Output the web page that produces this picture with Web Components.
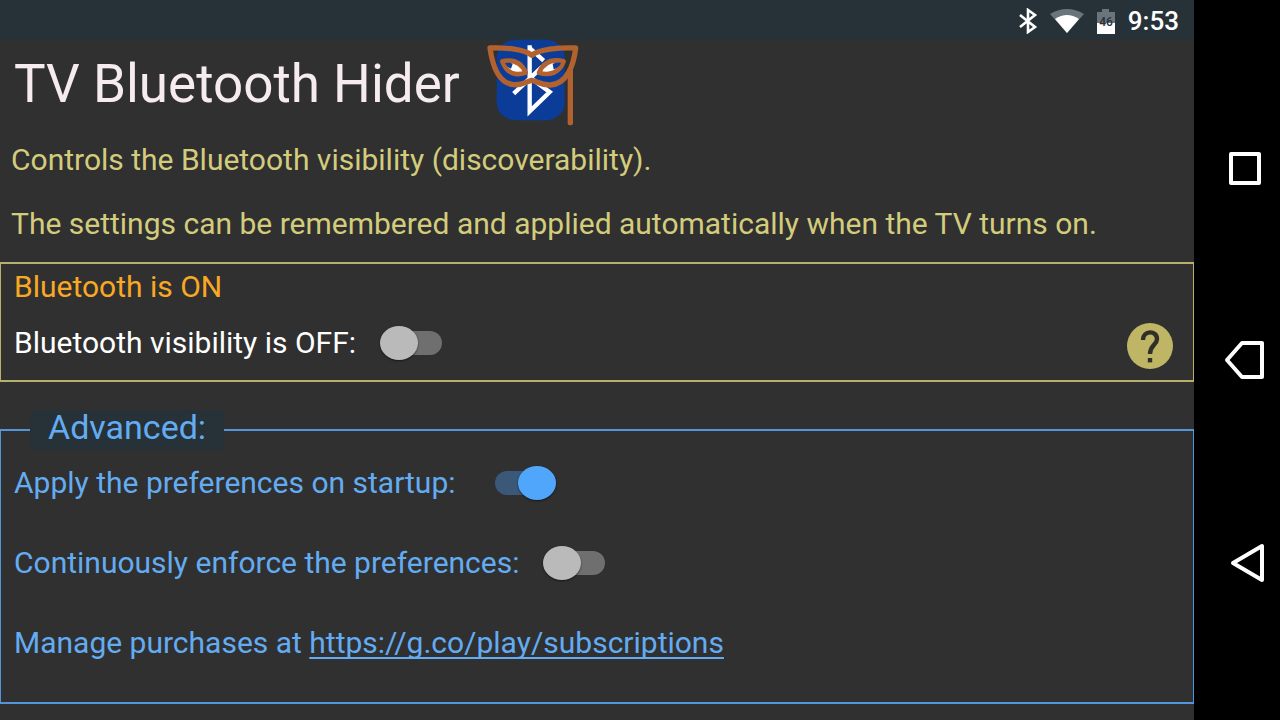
<!DOCTYPE html>
<html lang="en">
<head>
<meta charset="utf-8">
<meta name="viewport" content="width=device-width, initial-scale=1">
<title>TV Bluetooth Hider</title>
<style>
  body { margin: 0; background: #303030; font-family: Roboto, "Liberation Sans", sans-serif; }
</style>
</head>
<body>
<tv-hider-app></tv-hider-app>
<script>
class BaseElement extends HTMLElement {
  constructor() {
    super();
    this.attachShadow({ mode: 'open' }).innerHTML =
      '<style>*{box-sizing:border-box}' + this.constructor.css + '</style>' + this.constructor.html;
  }
}

customElements.define('status-bar', class extends BaseElement {
  static css = `
    :host { display: flex; align-items: center; justify-content: flex-end; gap: 12px; height: 40px;
      padding: 2px 15px 0 0; background: #263238; color: #fff; }
    svg { display: block; }
    time { font-size: 26px; line-height: 32px; font-weight: 500; }
  `;
  static html = `
    <svg width="20" height="26" viewBox="0 0 20 26" fill="none" stroke="#fff" stroke-width="2.6">
      <path d="M2 7L17 19L10 24V2L17 7L2 19"/>
    </svg>
    <svg width="34" height="24" viewBox="0 0 34 24">
      <path fill="#69757b" d="M0 5Q17 -5 34 5L17 24Z"/>
      <path fill="#fff" d="M5 10Q17 2 29 10L17 24Z"/>
    </svg>
    <svg width="20" height="25" viewBox="0 0 20 25">
      <path fill="#69757b" d="M6 0H13V3H19V14H1V3H6Z"/>
      <path fill="#fff" d="M1 14H19V25H1Z"/>
      <text x="10" y="17" text-anchor="middle" font-size="12" font-weight="500" fill="#263238">46</text>
    </svg>
    <time>9:53</time>
  `;
});

customElements.define('app-logo', class extends BaseElement {
  static css = `:host { display: block; } svg { display: block; overflow: visible; }`;
  static html = `
    <svg width="92" height="84" viewBox="24 30 276 252" role="img" aria-label="Masked Bluetooth logo">
      <rect x="53" y="29" width="204" height="242" rx="58" ry="52" fill="#0b3c98"/>
      <path d="M104 191L190 110M152 46V244L212 186L150 140M152 54L194 92" fill="none" stroke="#fff" stroke-width="13"/>
      <g fill="none" stroke="#b2622f" stroke-width="16" stroke-linejoin="round" stroke-linecap="round">
        <path fill="#0b3c98" fill-opacity="0" d="M33 54C80 52 138 58 158 76C180 58 240 52 290 54C284 106 264 162 214 165C184 166 176 154 158 151C142 154 134 166 104 164C58 160 40 104 33 54Z"/>
        <path fill="#fff" stroke-width="14" d="M70 94C100 88 126 94 140 128C112 138 84 132 70 94Z"/>
        <path fill="#fff" stroke-width="14" d="M254 94C220 86 194 96 180 128C210 138 240 130 254 94Z"/>
        <path d="M274 120V278"/>
      </g>
      <g fill="#0b3c98">
        <path d="M78 100C90 97 96 99 101 102L96 116C90 114 82 108 78 100Z"/>
        <path d="M246 99C236 96 226 99 221 102L224 118C234 116 242 108 246 99Z"/>
      </g>
    </svg>
  `;
});

customElements.define('toggle-row', class extends BaseElement {
  static css = `
    :host { display: flex; align-items: center; gap: 24px; height: 40px; }
    :host([wide]) { gap: 38px; }
    label { line-height: 40px; }
    input { appearance: none; display: grid; align-items: center; width: 62px; height: 34px;
      margin: 0; flex: none; cursor: pointer; }
    input::before, input::after { content: ""; grid-area: 1 / 1; }
    input::before { height: 24px; margin-left: 1px; border-radius: 12px; background: #6f6f6f; }
    input::after { width: 38px; height: 34px; border-radius: 50%; background: #bababa;
      box-shadow: 0 1px 2px #0008; }
    input:checked::before { background: #3b5878; }
    input:checked::after { background: #4fa6fb; justify-self: end; }
  `;
  static html = `<label for="s"><slot></slot></label><input id="s" type="checkbox" role="switch">`;
  connectedCallback() {
    this.shadowRoot.querySelector('input').checked = this.hasAttribute('checked');
  }
});

customElements.define('help-button', class extends BaseElement {
  static css = `
    :host { display: block; }
    button { display: block; padding: 0; border: 0; background: none; cursor: pointer; }
    svg { display: block; }
  `;
  static html = `
    <button type="button" aria-label="Help">
      <svg width="46" height="46" viewBox="0 0 46 46">
        <circle cx="23" cy="23" r="23" fill="#beb565"/>
        <path d="M16 17C16 7 30 7 30 16C30 22 23 22 23 31" fill="none" stroke="#303028" stroke-width="4.4"/>
        <path d="M20.800 35H25.200V39.400H20.800Z" fill="#303028"/>
      </svg>
    </button>
  `;
});

customElements.define('bluetooth-panel', class extends BaseElement {
  static css = `
    :host { display: grid; grid-template-columns: 1fr auto; row-gap: 16px; margin-top: 18px;
      padding: 3px 20px 11px 13px; border: 2px solid #b8b06c; border-left-width: 1px;
      border-right-width: 1px; font-size: 30px; color: #fff; }
    p { grid-column: 1 / 3; margin: 0; line-height: 40px; color: #f9a825; }
  `;
  static html = `
    <p>Bluetooth is ON</p>
    <toggle-row>Bluetooth visibility is OFF:</toggle-row>
    <help-button></help-button>
  `;
});

customElements.define('advanced-panel', class extends BaseElement {
  static css = `
    :host { display: block; margin: 28px 0 16px; font-size: 30px; color: #64acf2; }
    fieldset { display: grid; gap: 40px; min-width: 0; margin: 0; padding: 13px 13px 39px;
      border: 2px solid #5295d8; border-left-width: 1px; border-right-width: 1px; }
    legend { margin-left: 16px; padding: 0 18px 6px; background: #263238; font-size: 34px; line-height: 34px; }
    p { margin: 0; line-height: 40px; }
    a { color: inherit; text-underline-offset: 4px; text-decoration-thickness: 2px; text-decoration-skip-ink: none; }
  `;
  static html = `
    <fieldset>
      <legend>Advanced:</legend>
      <toggle-row wide checked>Apply the preferences on startup:</toggle-row>
      <toggle-row>Continuously enforce the preferences:</toggle-row>
      <p>Manage purchases at <a href="https://g.co/play/subscriptions">https://g.co/play/subscriptions</a></p>
    </fieldset>
  `;
});

customElements.define('nav-rail', class extends BaseElement {
  static css = `
    :host { display: grid; grid-template-rows: 16fr 16fr 18fr; place-items: center;
      padding: 72px 0 48px 16px; background: #000; }
    button { display: block; padding: 0; border: 0; background: none; cursor: pointer; }
    svg { display: block; fill: none; stroke: #fff; stroke-width: 4; stroke-linejoin: round; }
  `;
  static html = `
    <button type="button" aria-label="Recent apps"><svg width="44" height="44" viewBox="0 0 44 44"><path d="M8 8H36V37H8Z"/></svg></button>
    <button type="button" aria-label="Home"><svg width="44" height="44" viewBox="0 0 44 44"><path d="M4 22L19 5H39V39H19Z"/></svg></button>
    <button type="button" aria-label="Back"><svg width="44" height="44" viewBox="0 0 44 44"><path d="M10 21L39 4V38Z"/></svg></button>
  `;
});

customElements.define('tv-hider-app', class extends BaseElement {
  static css = `
    :host { display: grid; grid-template-columns: minmax(0, 1fr) 86px; min-height: 100vh; background: #303030; }
    header { display: flex; align-items: center; gap: 27px; padding: 0 14px; }
    h1 { margin: 0; padding-top: 4px; font-size: 53px; line-height: 64px; font-weight: 400; color: #f6ebee; }
    .intro { display: grid; gap: 24px; padding: 16px 11px 0; font-size: 30px; line-height: 40px; color: #d3cc7c; }
    .intro p { margin: 0; }
  `;
  static html = `
    <main>
      <status-bar></status-bar>
      <header><h1>TV Bluetooth Hider</h1><app-logo></app-logo></header>
      <div class="intro">
        <p>Controls the Bluetooth visibility (discoverability).</p>
        <p>The settings can be remembered and applied automatically when the TV turns on.</p>
      </div>
      <bluetooth-panel></bluetooth-panel>
      <advanced-panel></advanced-panel>
    </main>
    <nav-rail></nav-rail>
  `;
});
</script>
</body>
</html>
